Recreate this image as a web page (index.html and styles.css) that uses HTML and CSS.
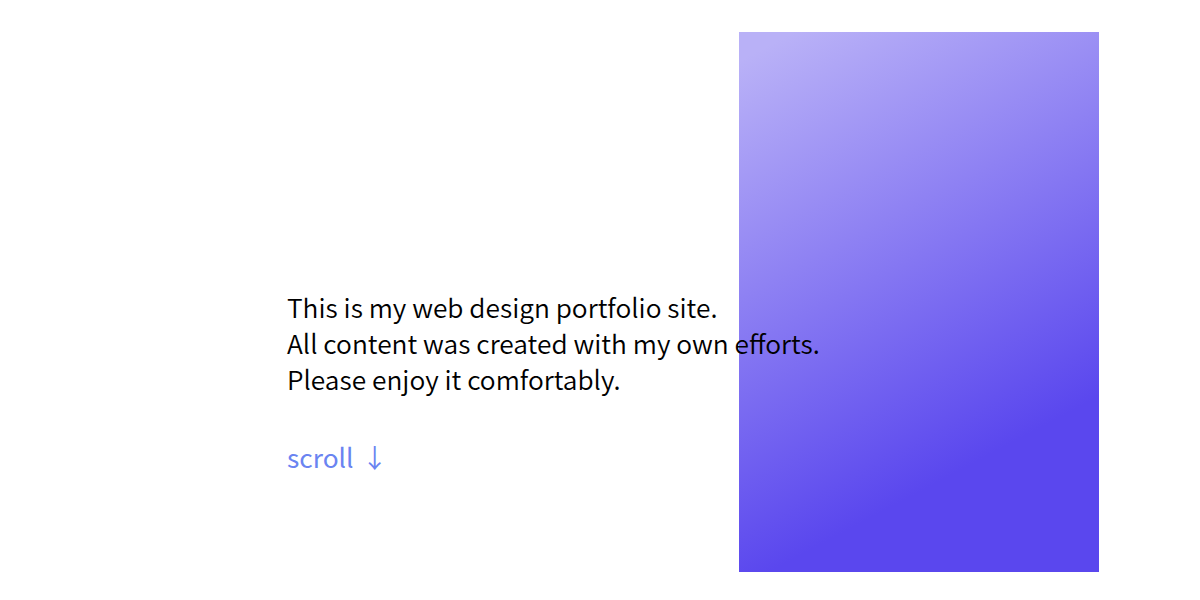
FILE: index.html
```html
<!DOCTYPE html>
<html lang="en">
<head>
<meta charset="utf-8">
<title>Portfolio</title>
<link rel="stylesheet" href="styles.css">
</head>
<body>
<main class="hero">
  <div class="hero-visual" aria-hidden="true"></div>
  <div class="hero-intro">
    <p class="hero-text">This is my web design portfolio site.<br>All content was created with my own efforts.<br>Please enjoy it comfortably.</p>
    <a class="scroll-link" href="#">scroll <span class="scroll-arrow">↓</span></a>
  </div>
</main>
</body>
</html>
```
FILE: styles.css
```css
* { box-sizing: border-box; }
html, body { margin: 0; padding: 0; background: #fff; }
body {
  font-family: "Noto Sans CJK JP", "Noto Sans", sans-serif;
  color: #000;
}
.hero {
  position: relative;
  height: 600px;
  overflow: hidden;
}
.hero-visual {
  position: absolute;
  top: 32px;
  left: 739px;
  width: 360px;
  height: 540px;
  background: linear-gradient(152deg, #b9b1f7 4%, #5a47ee 76%);
}
.hero-intro {
  position: relative;
  z-index: 1;
  padding: 289px 0 0 287px;
  display: flex;
  flex-direction: column;
  align-items: flex-start;
}
.hero-text {
  margin: 0;
  font-size: 26.3px;
  line-height: 36px;
  font-weight: 350;
  color: #000;
}
.scroll-link {
  margin-top: 40px;
  font-size: 26.3px;
  line-height: 39px;
  font-weight: 400;
  color: #6a84f1;
  text-decoration: none;
}
.scroll-arrow { margin-left: 2px; }
```
